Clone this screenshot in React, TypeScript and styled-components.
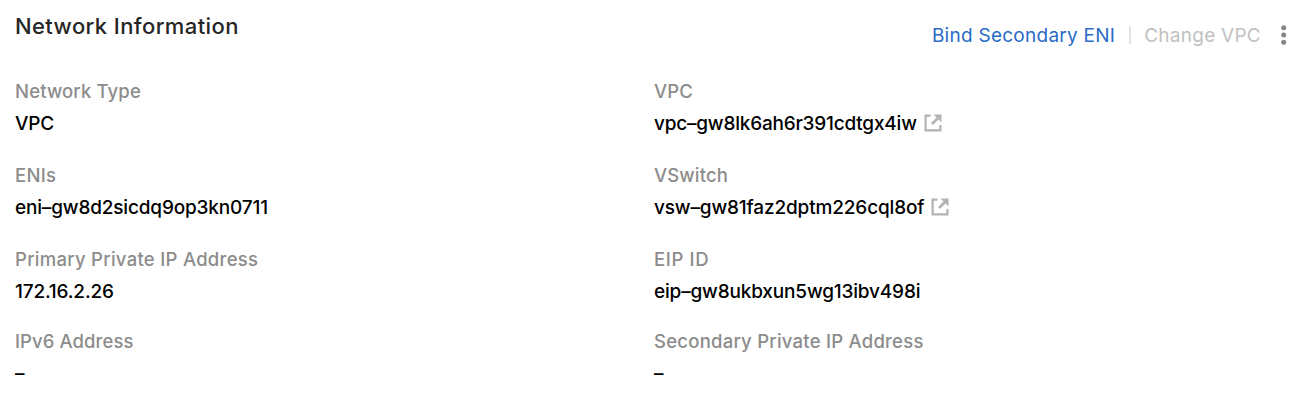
import React from 'react';
import styled, { createGlobalStyle } from 'styled-components';

const GlobalStyle = createGlobalStyle`
  *, *::before, *::after { box-sizing: border-box; }
  body {
    margin: 0;
    background: #fff;
    font-family: Inter, "Liberation Sans", sans-serif;
  }
`;

const Panel = styled.section`
  padding: 11px 19px 0 15px;
  height: 402px;
  background: #fff;
`;

const Header = styled.header`
  display: flex;
  justify-content: space-between;
  height: 64px;
`;

const Title = styled.h2`
  margin: 0;
  font-size: 22px;
  line-height: 31px;
  font-weight: 500;
  letter-spacing: 0.4px;
  color: #262626;
`;

const Actions = styled.div`
  display: flex;
  align-items: center;
  height: 26px;
  margin-top: 11px;
`;

const Action = styled.button<{ $disabled?: boolean }>`
  padding: 2px 0 0;
  border: 0;
  background: none;
  font: 400 19px/26px Inter, sans-serif;
  letter-spacing: 0.26px;
  white-space: nowrap;
  color: ${(p) => (p.$disabled ? '#c1c1c1' : '#2a6cc6')};
`;

const Divider = styled.span`
  width: 2px;
  height: 18px;
  margin: 0 13px 0 14px;
  background: #e3e3e3;
`;

const More = styled.button`
  display: flex;
  padding: 0;
  margin-left: 18px;
  border: 0;
  background: none;
`;

const Grid = styled.dl`
  display: grid;
  grid-template-columns: 639px 1fr;
  grid-template-rows: 84px 84px 82px 82px;
  margin: 0;
`;

const Label = styled.dt<{ $tracking: number }>`
  font-size: 18.5px;
  line-height: 32px;
  font-weight: 540;
  letter-spacing: ${(p) => p.$tracking}px;
  color: #8c8c8c;
`;

const Value = styled.dd<{ $tracking?: number }>`
  display: flex;
  align-items: center;
  gap: 7px;
  margin: 0;
  padding-top: 1px;
  font-size: 19px;
  line-height: 32px;
  font-weight: 500;
  letter-spacing: ${(p) => p.$tracking ?? -0.17}px;
  color: #000;

  svg {
    margin-bottom: 2px;
  }
`;

const LinkIcon = () => (
  <svg width="18" height="18" viewBox="0 0 18 18" fill="none" stroke="#b3b3b3" strokeWidth="2.2">
    <path d="M6.5 1.6H1.6V16.4H16.4V11" />
    <path d="M8 10L14.5 3.5" strokeWidth="2.7" />
    <path d="M9.5 0.5H17.5V8.5Z" fill="#b3b3b3" stroke="none" />
  </svg>
);

const fields = [
  { label: 'Network Type', value: 'VPC', tracking: 0.14 },
  { label: 'VPC', value: 'vpc–gw8lk6ah6r391cdtgx4iw', tracking: 0.1, valueTracking: -0.21, link: true },
  { label: 'ENIs', value: 'eni–gw8d2sicdq9op3kn0711', tracking: 0.3 },
  { label: 'VSwitch', value: 'vsw–gw81faz2dptm226cql8of', tracking: 0.14, valueTracking: -0.15, link: true },
  { label: 'Primary Private IP Address', value: '172.16.2.26', tracking: 0.28 },
  { label: 'EIP ID', value: 'eip–gw8ukbxun5wg13ibv498i', tracking: 0.65 },
  { label: 'IPv6 Address', value: '–', tracking: 0.08 },
  { label: 'Secondary Private IP Address', value: '–', tracking: 0.24 },
];

export default function App() {
  return (
    <>
      <GlobalStyle />
      <Panel>
        <Header>
          <Title>Network Information</Title>
          <Actions>
            <Action>Bind Secondary ENI</Action>
            <Divider />
            <Action $disabled>Change VPC</Action>
            <More aria-label="More">
              <svg width="10" height="20" viewBox="0 0 10 20" fill="#858585">
                <circle cx="4.7" cy="2.7" r="2.5" />
                <circle cx="4.7" cy="10" r="2.5" />
                <circle cx="4.7" cy="17.3" r="2.5" />
              </svg>
            </More>
          </Actions>
        </Header>
        <Grid>
          {fields.map((f) => (
            <div key={f.label}>
              <Label $tracking={f.tracking}>{f.label}</Label>
              <Value $tracking={f.valueTracking}>
                <span>{f.value}</span>
                {f.link && <LinkIcon />}
              </Value>
            </div>
          ))}
        </Grid>
      </Panel>
    </>
  );
}
